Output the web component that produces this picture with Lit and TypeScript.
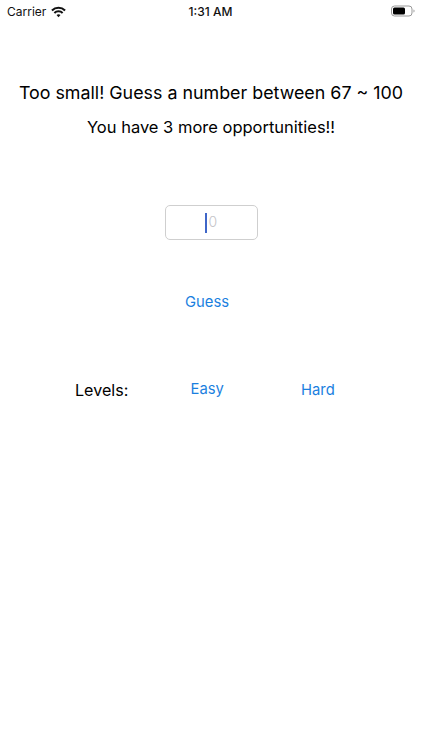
import { LitElement, html, css } from "lit";
import { customElement } from "lit/decorators.js";

@customElement("app-root")
export class AppRoot extends LitElement {
  static styles = css`
    :host { display: block; width: 422px; height: 750px; background: #fff; color: #000; font-family: Inter, "Liberation Sans", sans-serif; overflow: hidden; }
    .status { display: grid; grid-template-columns: 1fr auto 1fr; align-items: center; height: 22px; padding: 0 7px; font-size: 12px; color: #111; }
    .left { display: flex; align-items: center; gap: 5px; }
    .wifi { margin-top: 1px; }
    .right { display: flex; justify-content: flex-end; }
    .time { font-weight: 500; margin-left: -1px; }
    .msg { margin: 59px 0 0; text-align: center; font-size: 17.85px; line-height: 24px; white-space: nowrap; }
    .msg.two { margin-top: 10px; font-size: 16.5px; }
    .field { box-sizing: border-box; width: 93px; height: 35px; margin: 66px auto 0; border: 1px solid #cfcfcf; border-radius: 5px; display: flex; align-items: center; justify-content: center; color: #c4c4c8; font-size: 14px; font-weight: 300; }
    .caret { width: 2.5px; height: 20px; background: #3f66c8; margin-right: 1px; }
    .zero { position: relative; top: -1px; }
    .guess { display: block; margin: 51.5px 0 0 185px; color: #1a7fe0; font-size: 14.8px; line-height: 20px; }
    .levels { display: grid; grid-template-columns: 116px 110px auto; margin: 68.5px 0 0 75px; align-items: center; font-size: 14.8px; line-height: 20px; }
    .label { font-size: 16.1px; }
    .link { color: #1a7fe0; }
    .easy { position: relative; top: -1px; left: -0.5px; }
  `;
  render() {
    return html`
      <div class="status">
        <div class="left"><span>Carrier</span>
          <svg class="wifi" width="15" height="12" viewBox="0 0 16 12" fill="none" stroke="#111" stroke-width="2.2">
            <path d="M1 4.3a10 10 0 0 1 14 0"/><path d="M3.6 7a6.2 6.2 0 0 1 8.8 0"/><path d="M8 11.5 5.9 9.3a3 3 0 0 1 4.2 0z" fill="#111" stroke="none"/>
          </svg>
        </div>
        <div class="time">1:31 AM</div>
        <div class="right">
          <svg width="24" height="12" viewBox="0 0 24 12" fill="none">
            <rect x="0.5" y="1" width="20.5" height="10" rx="3" stroke="#999"/>
            <rect x="2" y="2.5" width="12" height="7" rx="1.5" fill="#000"/>
            <path d="M22.5 4.5v3a1.6 1.6 0 0 0 0-3z" fill="#999"/>
          </svg>
        </div>
      </div>
      <p class="msg">Too small! Guess a number between 67 ~ 100</p>
      <p class="msg two">You have 3 more opportunities!!</p>
      <div class="field"><span class="caret"></span><span class="zero">0</span></div>
      <span class="guess">Guess</span>
      <div class="levels"><span class="label">Levels:</span><span class="link easy">Easy</span><span class="link">Hard</span></div>
    `;
  }
}
